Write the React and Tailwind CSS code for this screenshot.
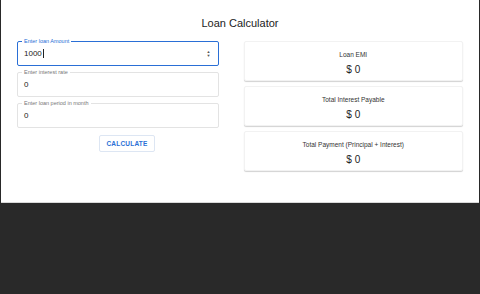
const Field = ({ label, value, focused }) => (
  <div
    className={`relative h-[25px] rounded-[2px] flex items-center px-[6px] ${
      focused ? "border-[1.5px] border-[#2a6fd6]" : "border border-[#e3e3e3]"
    }`}
  >
    <span
      className={`absolute left-[4px] top-[-5px] bg-white px-[2px] text-[5.5px] leading-[8px] ${
        focused ? "text-[#2a6fd6]" : "text-[#777]"
      }`}
    >
      {label}
    </span>
    <span className="text-[8px] text-[#222]">
      {value}
      {focused && <span className="inline-block w-px h-[9px] bg-[#222] align-middle ml-px" />}
    </span>
    {focused && (
      <span className="ml-auto flex flex-col items-center text-[#555] text-[4px] leading-[4px] mr-[1px]">
        <span>▲</span>
        <span>▼</span>
      </span>
    )}
  </div>
);

const ResultCard = ({ title, amount }) => (
  <div className="h-[40px] bg-white rounded-[2px] border border-[#f2f2f2] shadow-[0_1px_1px_rgba(0,0,0,0.18)] flex flex-col items-center pt-[9px]">
    <p className="text-[6.5px] text-[#333] leading-[8px]">{title}</p>
    <p className="text-[10px] text-[#222] leading-[12px] mt-[5px]">{amount}</p>
  </div>
);

const App = () => {
  return (
    <div
      className="w-[480px] h-[294px] bg-[#292929] flex flex-col"
      style={{ fontFamily: "'Liberation Sans', Arial, sans-serif" }}
    >
      <div className="ml-px mr-px h-[203px] bg-white border-b border-[#d8d8d8]">
        <h1 className="text-center text-[11px] text-[#222] pt-[16px] leading-[14px]">Loan Calculator</h1>

        <div className="flex px-[16px] pt-[11px] gap-[25px]">
          {/* inputs */}
          <div className="w-[202px] flex flex-col gap-[6px]">
            <Field label="Enter loan Amount" value="1000" focused />
            <Field label="Enter interest rate" value="0" />
            <Field label="Enter loan period in month" value="0" />
            <div className="flex pt-[1px] pl-[82px]">
              <button className="h-[17px] w-[56px] border border-[#dde6f3] rounded-[2px] text-[6.5px] font-semibold text-[#2a6fd6] tracking-[0.2px]">
                CALCULATE
              </button>
            </div>
          </div>

          {/* results */}
          <div className="w-[220px] flex flex-col gap-[5px]">
            <ResultCard title="Loan EMI" amount="$ 0" />
            <ResultCard title="Total Interest Payable" amount="$ 0" />
            <ResultCard title="Total Payment (Principal + Interest)" amount="$ 0" />
          </div>
        </div>
      </div>
    </div>
  );
};

export default App;
